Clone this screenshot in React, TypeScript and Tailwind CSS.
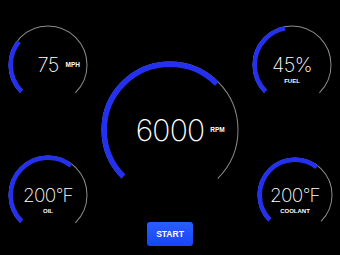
import React from "react";

type GaugeProps = {
  size: number;
  r: number;
  fill: number;
  bar: number;
  value: React.ReactNode;
  unit?: string;
  label?: string;
  big?: boolean;
  small?: boolean;
};

function Gauge({ size, r, fill, bar, value, unit, label, big, small }: GaugeProps) {
  const c = size / 2;
  const rb = r - bar / 2 + 0.5;
  const ring = 2 * Math.PI * r;
  const blue = 2 * Math.PI * rb;
  return (
    <div className="relative" style={{ width: size, height: size }}>
      <svg width={size} height={size} className="absolute inset-0">
        <circle
          cx={c}
          cy={c}
          r={r}
          fill="none"
          stroke="#8c8c8c"
          strokeWidth={1}
          strokeDasharray={`${ring * 0.75} ${ring}`}
          transform={`rotate(135 ${c} ${c})`}
        />
        <circle
          cx={c}
          cy={c}
          r={rb}
          fill="none"
          stroke="#2430f0"
          strokeWidth={bar}
          strokeDasharray={`${blue * 0.75 * fill} ${blue}`}
          transform={`rotate(135 ${c} ${c})`}
        />
      </svg>
      <div className="absolute inset-0 flex items-center justify-center">
        <span
          className={`relative font-extralight text-white leading-none antialiased font-['Inter',sans-serif] ${
            big
              ? "text-[30px] tracking-[-0.8px]"
              : small
              ? "text-[19px] tracking-[-0.7px]"
              : "text-[20px] tracking-[-0.6px]"
          }`}
        >
          {value}
          {unit && (
            <span
              className={`absolute left-full top-1/2 -translate-y-1/2 font-bold tracking-normal text-white font-['Liberation_Sans',sans-serif] text-[6.5px] ${
                big ? "ml-[6px]" : "ml-[7px]"
              }`}
            >
              {unit}
            </span>
          )}
          {label && (
            <span className="absolute left-1/2 top-full mt-[3px] -translate-x-1/2 font-bold tracking-normal text-white font-['Liberation_Sans',sans-serif] text-[6px]">
              {label}
            </span>
          )}
        </span>
      </div>
    </div>
  );
}

function Temp() {
  return (
    <>
      200<span className="text-[16px] align-[2px] ml-[0.5px]">°</span>F
    </>
  );
}

export default function App() {
  return (
    <div className="w-[340px] h-[255px] bg-black flex overflow-hidden">
      <div className="flex flex-col pl-[8px] pt-[25px] gap-[50px]">
        <Gauge size={80} r={39} fill={0.31} bar={4.5} value="75" unit="MPH" />
        <Gauge size={80} r={39} fill={0.64} bar={4.5} value={<Temp />} label="OIL" small />
      </div>
      <div className="flex flex-col items-center ml-[10px] pt-[58px]">
        <Gauge size={144} r={68} fill={0.667} bar={5.5} value="6000" unit="RPM" big />
        <button className="mt-[20px] w-[46px] h-[24px] rounded-[3px] bg-gradient-to-b from-[#2a5cff] to-[#1646f5] text-white font-bold text-[8.5px] font-['Liberation_Sans',sans-serif]">
          START
        </button>
      </div>
      <div className="flex flex-col items-start ml-[10px] pt-[25px] gap-[50px]">
        <Gauge size={80} r={39} fill={0.46} bar={4.5} value="45%" label="FUEL" />
        <div className="ml-[3px]">
          <Gauge size={80} r={37} fill={0.64} bar={4.5} value={<Temp />} label="COOLANT" small />
        </div>
      </div>
    </div>
  );
}
